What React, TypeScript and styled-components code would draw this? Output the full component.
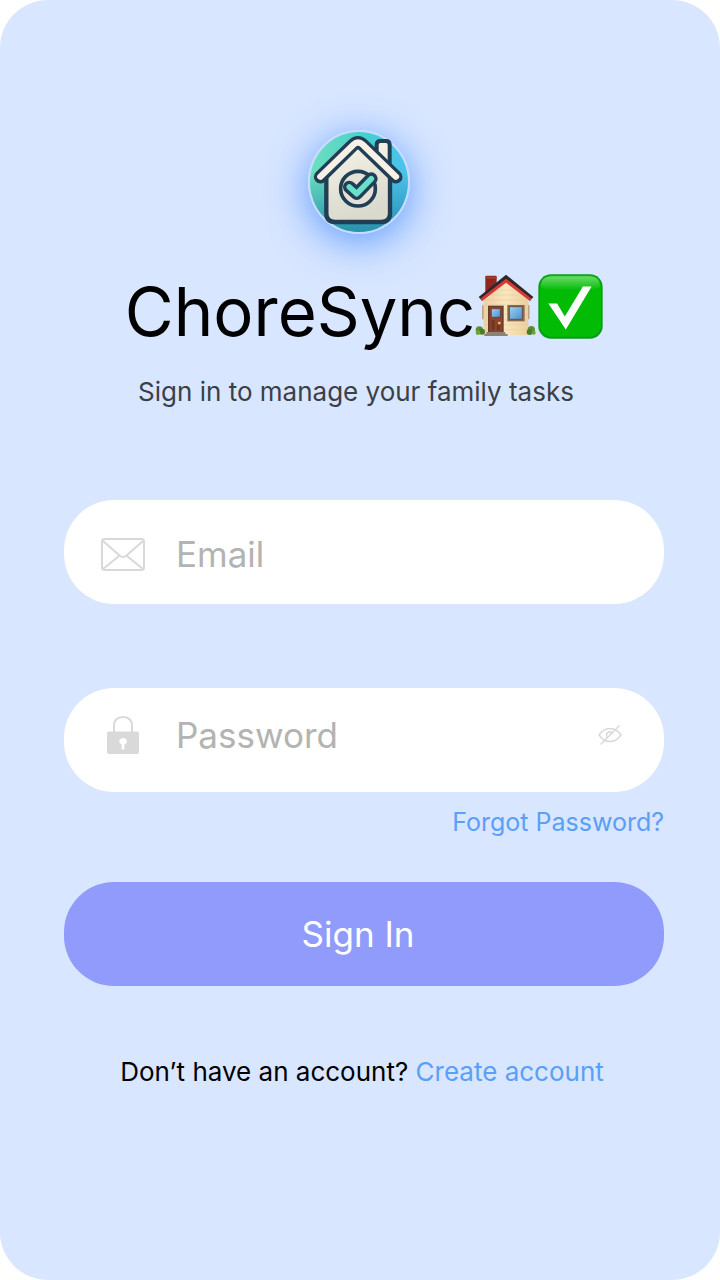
import React, { useState } from "react";
import styled, { createGlobalStyle } from "styled-components";

const GlobalStyle = createGlobalStyle`
  *, *::before, *::after { box-sizing: border-box; }
  body {
    margin: 0;
    background: #ffffff;
    font-family: Inter, "Liberation Sans", sans-serif;
  }
`;

const Screen = styled.main`
  display: flex;
  flex-direction: column;
  min-height: 100vh;
  padding: 130px 56px 64px 64px;
  border-radius: 48px;
  background: #d8e6ff;
`;

const Header = styled.header`
  display: flex;
  flex-direction: column;
  align-items: center;
  margin-bottom: 90px;
`;

const Logo = styled.div`
  width: 102px;
  height: 104px;
  margin-right: 10px;
  border-radius: 50%;
  box-shadow: 0 8px 40px rgba(60, 135, 255, 0.8);

  svg { display: block; }
`;

const Title = styled.h1`
  display: flex;
  align-items: center;
  margin: 36px 0 0;
  color: #000000;
  font-size: 67px;
  font-weight: 400;
  line-height: 84px;
`;

const Emojis = styled.span`
  display: flex;
  gap: 2px;
  margin: 0 0 12px;
`;

const Subtitle = styled.p`
  margin: 20px 16px 0 0;
  color: #3b3f47;
  font-size: 26px;
  line-height: 36px;
`;

const Form = styled.form`
  display: flex;
  flex-direction: column;
`;

const Field = styled.label<{ $padding: string }>`
  display: flex;
  align-items: center;
  height: 104px;
  padding: ${(p) => p.$padding};
  border-radius: 50px;
  background: #ffffff;

  & + & { margin-top: 84px; }
`;

const FieldIcon = styled.span`
  display: flex;
  flex: none;
  justify-content: center;
  width: 46px;
  margin-right: 30px;
`;

const Input = styled.input`
  flex: 1;
  min-width: 0;
  padding: 0;
  border: 0;
  outline: 0;
  background: transparent;
  color: #333333;
  font: inherit;
  font-size: 35px;
  line-height: 48px;

  &::placeholder { color: #b3b3b3; opacity: 1; }
`;

const IconButton = styled.button`
  display: flex;
  padding: 0;
  border: 0;
  background: none;
  cursor: pointer;
`;

const Link = styled.a`
  color: #5a9ff8;
  text-decoration: none;
`;

const ForgotLink = styled(Link)`
  align-self: flex-end;
  margin-top: 12px;
  font-size: 25px;
  line-height: 36px;
`;

const SubmitButton = styled.button`
  height: 104px;
  margin-top: 42px;
  padding: 0 12px 0 0;
  border: 0;
  border-radius: 50px;
  background: #909bfc;
  color: #ffffff;
  font: inherit;
  font-size: 35px;
  cursor: pointer;
`;

const Footer = styled.p`
  margin: 68px 4px 0 0;
  color: #000000;
  font-size: 26px;
  line-height: 36px;
  text-align: center;
`;

const HouseLogo = () => (
  <svg width="102" height="104" viewBox="114 90 306 312" role="img" aria-label="ChoreSync logo">
    <defs>
      <linearGradient id="sky" x1="0" y1="0.3" x2="1" y2="0.5">
        <stop offset="0" stopColor="#6fe0bd" />
        <stop offset="0.5" stopColor="#45cfd0" />
        <stop offset="1" stopColor="#4cc0f0" />
      </linearGradient>
      <linearGradient id="shade" x1="0" y1="0" x2="0" y2="1">
        <stop offset="0.4" stopColor="#1f7f9e" stopOpacity="0" />
        <stop offset="1" stopColor="#1f7f9e" stopOpacity="0.75" />
      </linearGradient>
      <linearGradient id="wall" x1="0" y1="0" x2="0.3" y2="1">
        <stop offset="0" stopColor="#f7f2e8" />
        <stop offset="1" stopColor="#d9d9cd" />
      </linearGradient>
    </defs>
    <ellipse cx="267" cy="246" rx="153" ry="156" fill="#c6dcff" />
    <ellipse cx="267" cy="246" rx="147" ry="150" fill="url(#sky)" />
    <ellipse cx="267" cy="246" rx="147" ry="150" fill="url(#shade)" />
    <g strokeLinecap="round" strokeLinejoin="round">
      <path d="M320 180V134Q320 123 331 123H348Q359 123 359 134V200Z" fill="#f3eee4" stroke="#213f54" strokeWidth="12" />
      <path d="M169 222V340Q169 366 195 366H334Q360 366 360 340V222L264 136Z" fill="url(#wall)" stroke="#213f54" strokeWidth="13" />
      <path d="M151 231L250 134Q264 121 278 134L378 231" fill="none" stroke="#213f54" strokeWidth="39" />
      <path d="M151 230L250 134Q264 121 278 134L378 230" fill="none" stroke="#f6f0e6" strokeWidth="19" />
      <circle cx="264" cy="266" r="52" fill="#e5e1d7" stroke="#213f54" strokeWidth="11" />
      <path d="M238 261L260 281L304 236" fill="none" stroke="#213f54" strokeWidth="38" />
      <path d="M238 261L260 281L304 236" fill="none" stroke="#69dfcc" strokeWidth="17" />
    </g>
  </svg>
);

const HouseEmoji = () => (
  <svg width="61" height="64" viewBox="26 30 183 192" aria-hidden="true">
    <defs>
      <linearGradient id="siding" x1="0" y1="0" x2="1" y2="0">
        <stop offset="0" stopColor="#ecd0a0" />
        <stop offset="0.5" stopColor="#fae5bd" />
        <stop offset="1" stopColor="#edcf9d" />
      </linearGradient>
      <linearGradient id="glass" x1="0" y1="0" x2="1" y2="1">
        <stop offset="0" stopColor="#98d2f7" />
        <stop offset="1" stopColor="#4b91cb" />
      </linearGradient>
    </defs>
    <path d="M57 38Q57 35 61 35H87Q91 35 91 38V76L57 98Z" fill="#8c2820" />
    <path d="M57 38H91V44H57Z" fill="#a63b2e" />
    <path d="M48 124H52V166H48ZM185 124H189V166H185Z" fill="#a78763" />
    <path d="M52 98L119 48L186 98V213H52Z" fill="url(#siding)" />
    <path d="M92 78H146M76 93H162M54 108H184M54 122H184M54 137H184M54 152H184M54 167H184M54 182H184M54 197H184" stroke="#dec497" strokeWidth="1" />
    <path d="M37 99L119 32L201 99L191 110L119 53L47 110Z" fill="#30262a" />
    <path d="M42 104L119 44L196 104L191 111L119 56L47 111Z" fill="#d63a34" />
    <circle cx="39" cy="198" r="11" fill="#5d8f2e" />
    <circle cx="47" cy="203" r="9" fill="#4b7c25" />
    <circle cx="35" cy="206" r="7" fill="#73a33b" />
    <circle cx="195" cy="197" r="11" fill="#5d8f2e" />
    <circle cx="190" cy="204" r="9" fill="#4b7c25" />
    <circle cx="202" cy="206" r="6" fill="#73a33b" />
    <path d="M65 125H112V207H65Z" fill="#6a3d2b" />
    <path d="M70 129H107V205H70Z" fill="#88452f" />
    <path d="M75 134H102V160H75Z" fill="url(#glass)" stroke="#643222" strokeWidth="2" />
    <path d="M76 168H85V199H76ZM91 184H101V199H91Z" fill="#713522" />
    <circle cx="99" cy="177" r="4" fill="#f5c744" />
    <path d="M123 123H175V172H123Z" fill="#8b6951" />
    <path d="M129 128H168V166H129Z" fill="url(#glass)" stroke="#6e513e" strokeWidth="3" />
    <path d="M60 204H117V210H124V216H54V210H60Z" fill="#8e8178" />
  </svg>
);

const CheckEmoji = () => (
  <svg width="65" height="65" viewBox="213 27 194 194" aria-hidden="true">
    <defs>
      <linearGradient id="gloss" x1="0" y1="0" x2="0" y2="1">
        <stop offset="0" stopColor="#8ee58c" />
        <stop offset="1" stopColor="#02bb05" />
      </linearGradient>
    </defs>
    <rect x="214" y="28" width="192" height="192" rx="38" fill="#0a9c1c" />
    <rect x="219" y="31" width="182" height="183" rx="34" fill="#02bb05" />
    <path d="M222 64Q222 34 254 34H367Q398 34 398 64Q398 76 310 76Q222 76 222 64Z" fill="url(#gloss)" opacity="0.75" />
    <path d="M244 115H270L293 154L347 64H373L296 193Z" fill="#ffffff" />
  </svg>
);

const MailIcon = () => (
  <svg width="44" height="33" viewBox="0 0 44 33" fill="none" stroke="#d9d9d9" strokeWidth="2" aria-hidden="true">
    <rect x="1" y="1" width="42" height="31" rx="2.5" />
    <path d="M2 3L18.500 17.500Q22 20.500 25.500 17.500L42 3M2 31L18 18M42 31L26 18" />
  </svg>
);

const LockIcon = () => (
  <svg width="32" height="38" viewBox="0 0 32 38" aria-hidden="true">
    <path d="M7 17V10Q7 1 16 1Q25 1 25 10V17" fill="none" stroke="#d9d9d9" strokeWidth="2" />
    <rect x="0" y="15.500" width="32" height="22.500" rx="2" fill="#d9d9d9" />
    <path d="M12.200 25.500a3.800 3.300 0 1 1 5.200 3V32.500a1.400 1.400 0 0 1-2.800 0V28.500a3.800 3.300 0 0 1-2.400-3Z" fill="#ffffff" />
  </svg>
);

const EyeOffIcon = () => (
  <svg width="24" height="22" viewBox="0 0 24 22" fill="none" stroke="#d9d9d9" strokeWidth="1.500" aria-hidden="true">
    <path d="M1 11Q5.500 4.500 12 4.500T23 11Q18.500 17.500 12 17.500T1 11Z" />
    <path d="M9 13.500Q7.500 9 11 7.800Q14 7.200 15 9.500M11.500 11L13 9.500" />
    <path d="M2.500 20.500L21.500 1.500" />
  </svg>
);

export default function App() {
  const [visible, setVisible] = useState(false);

  return (
    <>
      <GlobalStyle />
      <Screen>
        <Header>
          <Logo>
            <HouseLogo />
          </Logo>
          <Title>
            ChoreSync
            <Emojis>
              <HouseEmoji />
              <CheckEmoji />
            </Emojis>
          </Title>
          <Subtitle>Sign in to manage your family tasks</Subtitle>
        </Header>
        <Form onSubmit={(e) => e.preventDefault()}>
          <Field $padding="4px 36px 0">
            <FieldIcon>
              <MailIcon />
            </FieldIcon>
            <Input type="email" placeholder="Email" aria-label="Email" />
          </Field>
          <Field $padding="0 42px 10px 36px">
            <FieldIcon>
              <LockIcon />
            </FieldIcon>
            <Input type={visible ? "text" : "password"} placeholder="Password" aria-label="Password" />
            <IconButton type="button" aria-label="Toggle password visibility" onClick={() => setVisible(!visible)}>
              <EyeOffIcon />
            </IconButton>
          </Field>
          <ForgotLink href="#forgot">Forgot Password?</ForgotLink>
          <SubmitButton type="submit">Sign In</SubmitButton>
        </Form>
        <Footer>
          Don’t have an account? <Link href="#create">Create account</Link>
        </Footer>
      </Screen>
    </>
  );
}
